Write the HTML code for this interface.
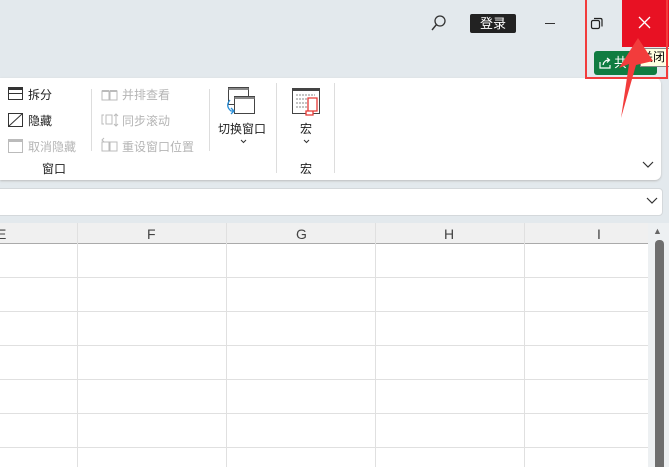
<!DOCTYPE html>
<html><head><meta charset="utf-8"><style>
body{margin:0;width:669px;height:467px;overflow:hidden;background:#e3e9ed;font-family:"Liberation Sans","Noto Sans CJK SC",sans-serif;position:relative}
.a{position:absolute}
.t{font-size:12px;color:#222;white-space:nowrap}
.g{color:#b5b5b5}
.ln{background:#e0e0e0}
</style></head><body>
<!-- title bar -->
<svg class="a" style="left:430px;top:14px" width="16" height="18"><circle cx="10" cy="7" r="5" fill="none" stroke="#333" stroke-width="1.3"/><path d="M6.5 10.5 L2 16" stroke="#333" stroke-width="1.4"/></svg>
<div class="a" style="left:470px;top:14px;width:46px;height:19px;background:#222;border-radius:2px;color:#fff;font-size:13px;text-align:center;line-height:19px">登录</div>
<div class="a" style="left:545px;top:23px;width:10px;height:1px;background:#333"></div>
<svg class="a" style="left:590px;top:17px" width="14" height="14"><rect x="1.5" y="3.5" width="8" height="8" rx="1.5" fill="none" stroke="#222" stroke-width="1.2"/><path d="M4 1.5 H10.5 Q12 1.5 12 3 V9.5" fill="none" stroke="#222" stroke-width="1.2"/></svg>
<div class="a" style="left:622px;top:0;width:47px;height:47px;background:#e81123"></div>
<svg class="a" style="left:638px;top:16px" width="14" height="14"><path d="M1 1 L12 12 M12 1 L1 12" stroke="#fff" stroke-width="1.3"/></svg>
<div class="a" style="left:594px;top:51px;width:63px;height:24px;background:#107c41;border-radius:3px"></div>
<svg class="a" style="left:598px;top:56px" width="14" height="14"><path d="M2 6 V12 H12 V9 M5 9 Q6 4 11 4 M9 2 L11.5 4 L9 6.5" fill="none" stroke="#fff" stroke-width="1.2"/></svg>
<div class="a" style="left:614px;top:52px;color:#fff;font-size:13px">共</div>
<div class="a" style="left:640px;top:48px;width:29px;height:17px;background:#ffffe1;border:1px solid #888;font-size:12px;line-height:17px;color:#000">关闭</div>
<!-- ribbon -->
<div class="a" style="left:0;top:78px;width:661px;height:102px;background:#fff;border-radius:0 6px 6px 0;box-shadow:0 1px 2px #bbb"></div>
<div class="a" style="left:585px;top:0;width:79px;height:77px;border:2px solid #f23c3c;border-top:none"></div>
<svg class="a" style="left:8px;top:86px" width="16" height="16"><rect x="0.5" y="1.5" width="14" height="12" fill="none" stroke="#333"/><path d="M0.5 7.5 H14.5" stroke="#333"/><path d="M0.5 3 H14.5" stroke="#333" stroke-width="2"/></svg>
<div class="a t" style="left:28px;top:86px">拆分</div>
<svg class="a" style="left:8px;top:112px" width="16" height="16"><rect x="0.5" y="1.5" width="14" height="13" fill="none" stroke="#333"/><path d="M1 14 L14 2" stroke="#333"/></svg>
<div class="a t" style="left:28px;top:112px">隐藏</div>
<svg class="a" style="left:8px;top:138px" width="16" height="16"><rect x="0.5" y="1.5" width="14" height="13" fill="none" stroke="#bbb"/><path d="M0.5 3 H14.5" stroke="#bbb" stroke-width="2"/></svg>
<div class="a t g" style="left:28px;top:138px">取消隐藏</div>
<div class="a t" style="left:42px;top:160px">窗口</div>
<div class="a" style="left:91px;top:89px;width:1px;height:62px;background:#ddd"></div>
<svg class="a" style="left:101px;top:88px" width="18" height="14"><path d="M1 3 H8 V12 H1 Z M9 3 H16 V12 H9 Z" fill="none" stroke="#bbb"/><path d="M1 3 H8 M9 3 H16" stroke="#bbb" stroke-width="2"/></svg>
<div class="a t g" style="left:122px;top:86px">并排查看</div>
<svg class="a" style="left:101px;top:112px" width="18" height="16"><path d="M3 3 H1 V12 H3 M5 3 H11 V12 H5 Z M15 2 V14 M13 4 L15 2 L17 4 M13 12 L15 14 L17 12" fill="none" stroke="#bbb"/></svg>
<div class="a t g" style="left:122px;top:112px">同步滚动</div>
<svg class="a" style="left:101px;top:137px" width="18" height="16"><path d="M1 5 H8 V14 H1 Z M9 5 H16 V14 H9 Z M3 1 L1 3 L3 5" fill="none" stroke="#bbb"/></svg>
<div class="a t g" style="left:122px;top:138px">重设窗口位置</div>
<div class="a" style="left:209px;top:89px;width:1px;height:62px;background:#ddd"></div>
<svg class="a" style="left:225px;top:86px" width="32" height="30"><rect x="3.5" y="1.5" width="20" height="17" fill="#fff" stroke="#444"/><path d="M3.5 3 H23.5" stroke="#888" stroke-width="2"/><rect x="9.5" y="10.5" width="20" height="17" fill="#fff" stroke="#444"/><path d="M9.5 12 H29.5" stroke="#888" stroke-width="2"/><path d="M5 14 Q0 20 6 25 L9 25 M6 22 L9 25 L6 28" fill="none" stroke="#2b8fd8" stroke-width="1.3"/></svg>
<div class="a t" style="left:218px;top:120px">切换窗口</div>
<svg class="a" style="left:240px;top:139px" width="7" height="5"><path d="M1 1 L3.5 3.5 L6 1" fill="none" stroke="#333"/></svg>
<div class="a" style="left:276px;top:83px;width:1px;height:90px;background:#ddd"></div>
<svg class="a" style="left:291px;top:86px" width="32" height="32"><rect x="1.5" y="2.5" width="27" height="25" fill="#fff" stroke="#444"/><path d="M1.5 4 H28.5" stroke="#444" stroke-width="2"/><path d="M5 9 H24 M5 13 H20 M5 17 H18 M5 21 H16" stroke="#888" stroke-dasharray="2 1"/><path d="M17 12 H26 V25 H17 Z M15 25 H22 V29 H15 Z" fill="#fff" stroke="#e53935" stroke-width="1.3"/></svg>
<div class="a t" style="left:300px;top:120px">宏</div>
<svg class="a" style="left:303px;top:139px" width="7" height="5"><path d="M1 1 L3.5 3.5 L6 1" fill="none" stroke="#333"/></svg>
<div class="a t" style="left:300px;top:160px">宏</div>
<div class="a" style="left:334px;top:83px;width:1px;height:90px;background:#ddd"></div>
<svg class="a" style="left:642px;top:161px" width="12" height="8"><path d="M1 1 L6 6 L11 1" fill="none" stroke="#333" stroke-width="1.2"/></svg>
<!-- formula bar -->
<div class="a" style="left:-5px;top:188px;width:666px;height:26px;background:#fff;border:1px solid #d4d8db;border-radius:4px"></div>
<svg class="a" style="left:646px;top:197px" width="12" height="8"><path d="M1 1 L6 6 L11 1" fill="none" stroke="#333" stroke-width="1.2"/></svg>
<!-- grid -->
<div class="a" style="left:0;top:223px;width:648px;height:244px;background:#fff"></div>
<div class="a" style="left:0;top:223px;width:648px;height:20px;background:#f0f0f0;border-bottom:1px solid #aaa"></div>
<div class="a" style="left:648px;top:223px;width:21px;height:244px;background:#edf0f2"></div>
<div class="a" style="left:653px;top:226px;font-size:9px;color:#666">▲</div>
<div class="a" style="left:655px;top:240px;width:9px;height:227px;background:#6e6e6e;border-radius:4px 4px 0 0"></div>
<div class="a ln" style="left:77px;top:223px;width:1px;height:244px"></div>
<div class="a ln" style="left:226px;top:223px;width:1px;height:244px"></div>
<div class="a ln" style="left:375px;top:223px;width:1px;height:244px"></div>
<div class="a ln" style="left:524px;top:223px;width:1px;height:244px"></div>
<div class="a ln" style="left:0;top:277px;width:648px;height:1px"></div>
<div class="a ln" style="left:0;top:311px;width:648px;height:1px"></div>
<div class="a ln" style="left:0;top:345px;width:648px;height:1px"></div>
<div class="a ln" style="left:0;top:379px;width:648px;height:1px"></div>
<div class="a ln" style="left:0;top:413px;width:648px;height:1px"></div>
<div class="a ln" style="left:0;top:447px;width:648px;height:1px"></div>
<div class="a" style="left:-3px;top:226px;font-size:14px;color:#444">E</div>
<div class="a" style="left:147px;top:226px;font-size:14px;color:#444">F</div>
<div class="a" style="left:296px;top:226px;font-size:14px;color:#444">G</div>
<div class="a" style="left:444px;top:226px;font-size:14px;color:#444">H</div>
<div class="a" style="left:597px;top:226px;font-size:14px;color:#444">I</div>
<svg class="a" style="left:0;top:0" width="669" height="130"><polygon points="638,38 619,68 629,64 621,118 636,65 653,61" fill="#f23c3c"/></svg>
</body></html>
